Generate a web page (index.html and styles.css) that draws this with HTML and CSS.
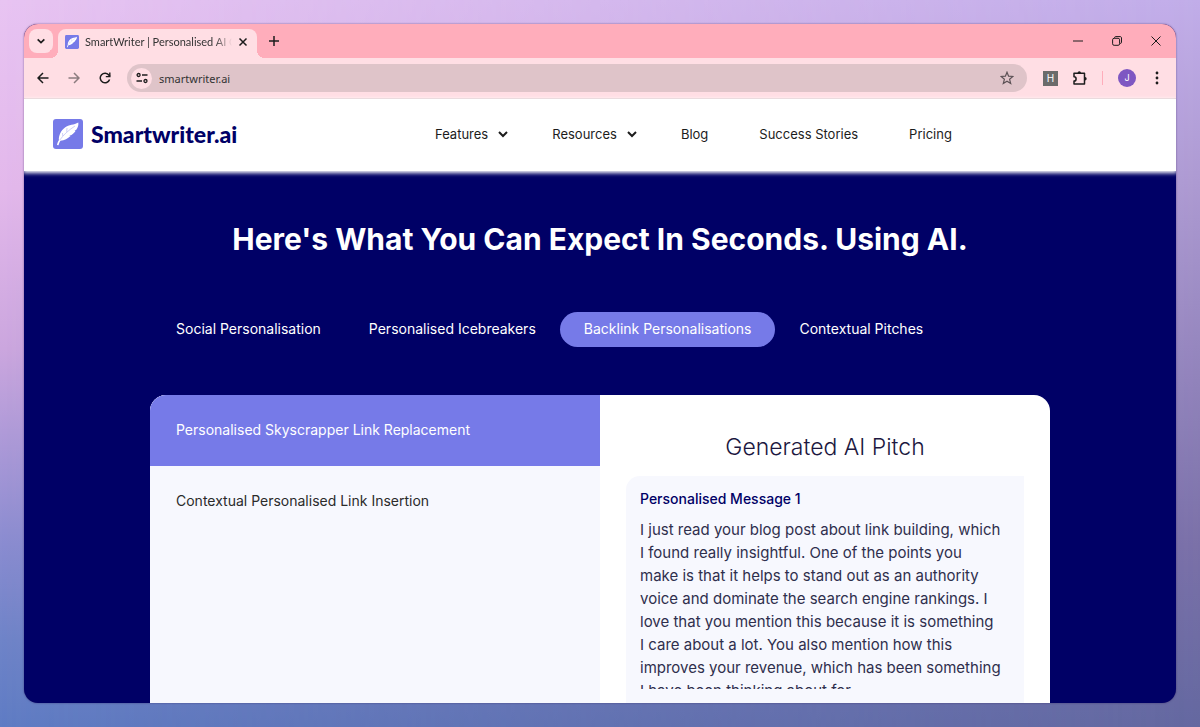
FILE: index.html
```
<!DOCTYPE html>
<html lang="en">
<head>
<meta charset="utf-8">
<meta name="viewport" content="width=device-width, initial-scale=1">
<title>SmartWriter | Personalised AI Content</title>
<link rel="stylesheet" href="styles.css">
</head>
<body>
<svg class="defs" aria-hidden="true">
  <symbol id="feather" viewBox="0 0 30 30">
    <rect width="30" height="30" rx="3" fill="#767ae8"/>
    <path fill="#fff" d="M4 26c.3-2 .9-3.300 1.900-4.800C5.500 16.500 8 11.500 12 8.500 16 5.500 21 6 25.300 3.500c.4 2.700-.4 5-2 7.200l-1.900.9 1.200.2c-1 1.700-2.300 3-4.100 4.300l-2.300.7 1.300.2c-2.800 2.600-5.900 4.200-10.100 4.800-.8 1.300-1.400 2.600-1.900 4.400z"/>
    <path fill="none" stroke="#767ae8" stroke-opacity=".6" stroke-width=".6" d="M6.800 21C10.500 16 15 11.500 22 7M9.500 14l.3 3M14 9l-.3 3.800"/>
  </symbol>
  <symbol id="chevron" viewBox="0 0 12 12">
    <path d="M2 4l4 4 4-4" fill="none" stroke="currentColor" stroke-width="2"/>
  </symbol>
</svg>

<div class="window">
  <div class="tabstrip">
    <button class="tab-search" aria-label="Search tabs"><svg class="i10"><use href="#chevron"/></svg></button>
    <div class="tab">
      <svg class="favicon"><use href="#feather"/></svg>
      <span class="tab-title">SmartWriter | Personalised AI Co</span>
      <button class="plain" aria-label="Close tab"><svg class="i10" viewBox="0 0 10 10"><path d="M1.500 1.500l7 7m0-7l-7 7" stroke="currentColor" stroke-width="1.500"/></svg></button>
    </div>
    <button class="plain new-tab" aria-label="New tab"><svg class="i10" viewBox="0 0 10 10"><path d="M5 0v10M0 5h10" stroke="currentColor" stroke-width="1.500"/></svg></button>
    <div class="controls">
      <button class="plain" aria-label="Minimise"><svg class="i10" viewBox="0 0 10 10"><path d="M0 5h10" stroke="currentColor"/></svg></button>
      <button class="plain" aria-label="Restore"><svg class="i10" viewBox="0 0 10 10"><g fill="none" stroke="currentColor"><rect x=".6" y="2.300" width="7" height="7" rx="1.500"/><path d="M2.600 2V1.600C2.600 1 3 .6 3.600.6H8C9 .6 9.500 1.100 9.500 2v4.300C9.500 7 9 7.400 8.500 7.400H8"/></g></svg></button>
      <button class="plain" aria-label="Close"><svg class="i10" viewBox="0 0 10 10"><path d="M.5.5l9 9m0-9l-9 9" stroke="currentColor"/></svg></button>
    </div>
  </div>

  <div class="toolbar">
    <div class="nav-buttons">
      <button class="plain" aria-label="Back"><svg class="i12" viewBox="0 0 12 12"><path d="M11.500 6H1.500M6 1L1 6l5 5" fill="none" stroke="currentColor" stroke-width="1.500"/></svg></button>
      <button class="plain forward" aria-label="Forward"><svg class="i12" viewBox="0 0 12 12"><path d="M.5 6h10M6 1l5 5-5 5" fill="none" stroke="currentColor" stroke-width="1.500"/></svg></button>
      <button class="plain" aria-label="Reload"><svg class="i12" viewBox="0 0 12 12"><path d="M10.600 7.500A4.800 4.800 0 1 1 10 3.200L11 4.500" fill="none" stroke="currentColor" stroke-width="1.500"/><path d="M11.500.5v4.800H6.800V4h3.300V.5z" fill="currentColor"/></svg></button>
    </div>
    <div class="address">
      <button class="site-info" aria-label="Site information"><svg class="i12" viewBox="0 0 12 12"><g fill="none" stroke="currentColor" stroke-width="1.300"><circle cx="2.600" cy="3" r="1.500"/><path d="M6 3h5.500M.5 9H6"/><circle cx="9.500" cy="9" r="1.500"/></g></svg></button>
      <input class="url" type="text" value="smartwriter.ai" aria-label="Address">
      <button class="plain star" aria-label="Bookmark"><svg class="i14" viewBox="0 0 14 14"><path d="M7 1.200l1.600 4 4.300.3-3.300 2.800 1.100 4.200L7 10.200l-3.700 2.300 1.100-4.200L1.100 5.500l4.300-.3z" fill="none" stroke="currentColor" stroke-width="1.200"/></svg></button>
    </div>
    <div class="extensions">
      <button class="ext-h" aria-label="H extension">H</button>
      <button class="plain" aria-label="Extensions"><svg class="i14" viewBox="0 0 14 14"><path d="M1 2.300h10.500v10.800H1V10a2 2 0 0 0 0-4.200z" fill="none" stroke="currentColor" stroke-width="1.500" stroke-linejoin="round"/><path d="M4.600 2a1.700 1.700 0 0 1 3.400 0zM12 6a1.700 1.700 0 0 1 0 3.400z" fill="currentColor"/></svg></button>
      <span class="divider"></span>
      <button class="avatar" aria-label="Profile">J</button>
      <button class="plain" aria-label="Menu"><svg class="menu" viewBox="0 0 12 14"><g fill="currentColor"><circle cx="6" cy="2" r="1.400"/><circle cx="6" cy="7" r="1.400"/><circle cx="6" cy="12" r="1.400"/></g></svg></button>
    </div>
  </div>

  <header class="site-header">
    <a class="brand" href="#"><svg class="logo"><use href="#feather"/></svg><span>Smartwriter.ai</span></a>
    <nav class="site-nav">
      <a href="#">Features<svg class="i12"><use href="#chevron"/></svg></a>
      <a href="#">Resources<svg class="i12"><use href="#chevron"/></svg></a>
      <a href="#">Blog</a>
      <a href="#">Success Stories</a>
      <a href="#">Pricing</a>
    </nav>
  </header>

  <main class="hero">
    <h1>Here's What You Can Expect In Seconds. Using AI.</h1>
    <div class="content">
      <div class="tabs" role="tablist">
        <button role="tab">Social Personalisation</button>
        <button role="tab">Personalised Icebreakers</button>
        <button role="tab" class="active" aria-selected="true">Backlink Personalisations</button>
        <button role="tab">Contextual Pitches</button>
      </div>
      <div class="card">
        <div class="options">
          <button class="option selected">Personalised Skyscrapper Link Replacement</button>
          <button class="option">Contextual Personalised Link Insertion</button>
        </div>
        <section class="pitch">
          <h2>Generated AI Pitch</h2>
          <article class="message">
            <h3>Personalised Message 1</h3>
            <p>I just read your blog post about link building, which<br>
            I found really insightful. One of the points you<br>
            make is that it helps to stand out as an authority<br>
            voice and dominate the search engine rankings. I<br>
            love that you mention this because it is something<br>
            I care about a lot. You also mention how this<br>
            improves your revenue, which has been something<br>
            I have been thinking about for</p>
          </article>
        </section>
      </div>
    </div>
  </main>
</div>
</body>
</html>
```
FILE: styles.css
```
* { box-sizing: border-box; }

body {
  margin: 0;
  height: 100vh;
  padding: 24px;
  position: relative;
  overflow: hidden;
  font-family: Inter, "Liberation Sans", sans-serif;
  color: #1c1c1c;
  background: linear-gradient(#e8c4f2, #e3b8eb 26%, #cba6de 48%, #8a8cd0 75%, #6f84c8 88%, #5f7cc4);
}

body::before {
  content: "";
  position: absolute;
  inset: 0;
  background: linear-gradient(#c1ade9, #ad9ad2 25%, #7a70a8 75%, #6468a0);
  -webkit-mask-image: linear-gradient(90deg, transparent, #000);
  mask-image: linear-gradient(90deg, transparent, #000);
}

button {
  font: inherit;
  color: inherit;
  border: 0;
  padding: 0;
  background: none;
  cursor: pointer;
}

a { color: inherit; text-decoration: none; }
svg { display: block; flex: none; }

.defs { position: absolute; width: 0; height: 0; }
.plain { display: flex; align-items: center; justify-content: center; }
.i10 { width: 10px; height: 10px; }
.i12 { width: 12px; height: 12px; }
.i14 { width: 14px; height: 14px; }

.window {
  position: relative;
  display: flex;
  flex-direction: column;
  height: 100%;
  border-radius: 14px;
  overflow: hidden;
  background: #000066;
  box-shadow: 0 0 2px rgba(40, 20, 80, .6);
}

/* Browser chrome */
.tabstrip {
  display: flex;
  flex: none;
  height: 34px;
  background: #ffadbb;
  font-family: "Noto Sans", "Open Sans", sans-serif;
}

.tab-search {
  display: flex;
  align-items: center;
  justify-content: center;
  width: 24px;
  height: 24px;
  margin: 5px 5px 0;
  border-radius: 8px;
  background: #ffdee4;
}

.tab {
  position: relative;
  display: flex;
  align-items: center;
  gap: 6px;
  width: 199px;
  margin-top: 5px;
  padding: 0 9px 4px 7px;
  border-radius: 8px 8px 0 0;
  background: #ffdee4;
}

.tab::before,
.tab::after {
  content: "";
  position: absolute;
  bottom: 0;
  width: 8px;
  height: 8px;
}
.tab::before { right: 100%; background: radial-gradient(circle at 0 0, #ffadbb 8px, #ffdee4 8px); }
.tab::after { left: 100%; background: radial-gradient(circle at 100% 0, #ffadbb 8px, #ffdee4 8px); }

.favicon { width: 14px; height: 14px; }

.tab-title {
  flex: 1;
  min-width: 0;
  overflow: hidden;
  white-space: nowrap;
  font-family: Lato, sans-serif;
  font-size: 11px;
  color: #333;
  -webkit-mask-image: linear-gradient(90deg, #000 88%, transparent);
  mask-image: linear-gradient(90deg, #000 88%, transparent);
}

.new-tab { width: 34px; }
.controls { display: flex; gap: 29px; margin-left: auto; padding-right: 15px; }

.toolbar {
  display: flex;
  flex: none;
  align-items: center;
  height: 41px;
  border-bottom: 1px solid #dcc2c8;
  background: #ffdee4;
  font-family: "Noto Sans", "Open Sans", sans-serif;
}

.nav-buttons { display: flex; gap: 19px; padding: 0 16px 0 13px; }
.forward { opacity: .5; }

.address {
  display: flex;
  flex: 1;
  align-items: center;
  height: 28px;
  padding: 0 13px 0 4px;
  border-radius: 14px;
  background: #dfc4c9;
}

.site-info {
  display: flex;
  align-items: center;
  justify-content: center;
  width: 21px;
  height: 21px;
  border-radius: 50%;
  background: #ffdee4;
}

.url {
  flex: 1;
  min-width: 0;
  border: 0;
  padding: 0 7px;
  outline: 0;
  background: none;
  font: inherit;
  font-size: 11px;
  color: #333;
}

.star { color: #5c5256; }
.extensions { display: flex; align-items: center; gap: 15px; padding: 0 13px 0 16px; }

.ext-h {
  width: 15px;
  height: 15px;
  background: #6b6b6b;
  color: #fff;
  font: 10px/15px Inter, sans-serif;
}

.divider { width: 1px; height: 14px; background: #ffadbb; }

.avatar {
  width: 18px;
  height: 18px;
  border-radius: 50%;
  background: #7e57c2;
  color: #fff;
  font: 9px/18px Inter, sans-serif;
}

.menu { width: 12px; height: 14px; }

/* Site header */
.site-header {
  position: relative;
  display: flex;
  flex: none;
  align-items: center;
  height: 72px;
  padding: 0 29px 2px;
  background: #fff;
  box-shadow: 0 1px 4px 1px #fff;
}

.brand {
  display: flex;
  align-items: center;
  gap: 8px;
  width: 382px;
  font: 900 23px/30px Lato, sans-serif;
  color: #000066;
}

.logo { width: 30px; height: 30px; }

.site-nav {
  display: flex;
  gap: 51px;
  font-size: 13px;
  line-height: 20px;
}
.site-nav a { display: flex; align-items: center; gap: 9px; white-space: nowrap; }
.site-nav a:has(svg) { margin-right: -8px; }

/* Hero */
.hero {
  display: flex;
  flex: 1;
  flex-direction: column;
  min-height: 0;
  padding: 44px 24px 0;
}

h1 {
  margin: 0;
  text-align: center;
  font-size: 30px;
  line-height: 48px;
  font-weight: 700;
  color: #fff;
}

.content {
  display: flex;
  flex: 1;
  flex-direction: column;
  min-height: 0;
  width: 100%;
  max-width: 900px;
  margin: 49px auto 0;
}

.tabs { display: flex; flex: none; margin-bottom: 48px; padding-left: 2px; }

.tabs button {
  height: 35px;
  padding: 0 24px 2px;
  border-radius: 18px;
  white-space: nowrap;
  font-size: 14px;
  color: #fff;
}
.tabs .active { background: #767ae8; }

.card {
  display: grid;
  flex: 1;
  grid-template-columns: 1fr 1fr;
  min-height: 0;
  border-radius: 16px 16px 0 0;
  overflow: hidden;
  background: #fff;
}

.options { display: flex; flex-direction: column; background: #f7f8fe; }

.option {
  height: 71px;
  padding: 0 26px 2px;
  text-align: left;
  font-size: 14px;
  color: #2b2b2b;
}
.selected { background: #767ae8; color: #fff; }

.pitch {
  display: flex;
  flex-direction: column;
  min-height: 0;
  padding: 36px 26px 0;
}

h2 {
  margin: 0 0 13px;
  text-align: center;
  font-size: 23px;
  line-height: 32px;
  font-weight: 300;
  color: #1c1740;
}

.message {
  flex: 1;
  min-height: 0;
  display: flex;
  flex-direction: column;
  padding: 11px 14px 14px;
  border-radius: 14px 0 0 0;
  background: #f7f8fe;
}

h3 {
  margin: 0 0 8px;
  font-size: 14px;
  line-height: 23px;
  font-weight: 500;
  color: #000066;
}

.message p {
  flex: 1;
  min-height: 0;
  margin: 0;
  overflow: hidden;
  font-size: 15px;
  line-height: 23px;
  color: #2f2f4d;
}
```
